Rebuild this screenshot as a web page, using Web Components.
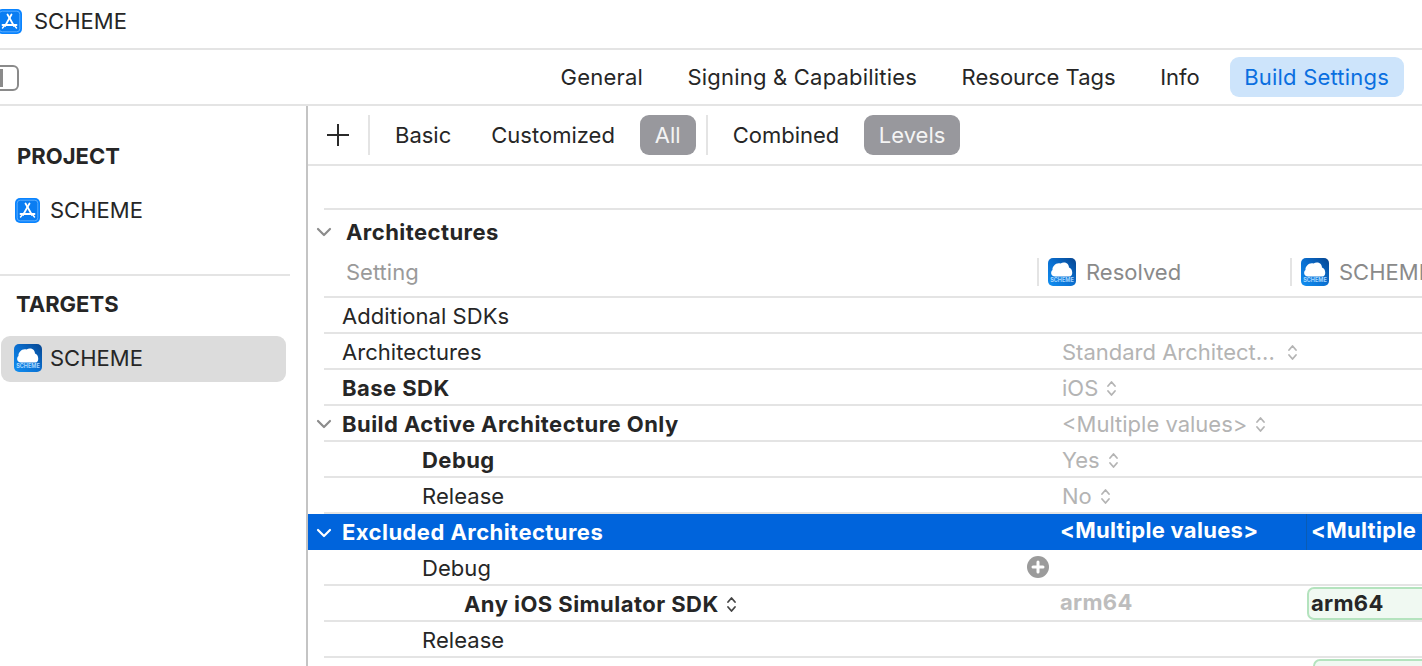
<!DOCTYPE html>
<html>
<head>
<meta charset="utf-8">
<title>Build Settings</title>
<style>
    html, body { margin: 0; height: 100%; background: #fff; overflow: hidden; }
    body { font: 22px Inter, "Liberation Sans", sans-serif; color: #262626; }
</style>
</head>
<body>
<xc-window></xc-window>

<script>
const esc = (s) => (s || '').replace(/&/g, '&amp;').replace(/</g, '&lt;').replace(/>/g, '&gt;');

// --- Icons ---
class AppIcon extends HTMLElement {
    connectedCallback() {
        const kind = this.getAttribute('kind') || 'store';
        const size = this.getAttribute('size') || 25;
        const store = `
            <rect width="25" height="25" rx="5" fill="#0a84ff"/>
            <rect x="2.200" y="2.200" width="20.600" height="20.600" rx="3" fill="#0a7df2" stroke="#6db8ff" stroke-width="0.800"/>
            <g stroke="#fff" stroke-width="1.800" stroke-linecap="round" fill="none">
                <path d="M10.500 5.500 L17 17"/>
                <path d="M14.500 5.500 L8 17"/>
                <path d="M5.500 16 H19.500"/>
                <path d="M5.500 19 L6.800 17.500 M19.500 19 L18.200 17.500" stroke-width="1.500"/>
            </g>`;
        const cloud = `
            <defs><linearGradient id="g" x1="1" y1="0" x2="0" y2="1">
                <stop offset="0" stop-color="#07458f"/><stop offset="0.5" stop-color="#0a6fd0"/><stop offset="1" stop-color="#118ff2"/>
            </linearGradient></defs>
            <rect width="28" height="28" rx="5" fill="url(#g)"/>
            <path d="M7 18.500 C3 18.500 2 14 4.500 12 C4 8 8.500 4 12.500 5.500 C16 3 21 5 21 9.500 C25 10.500 25.500 18.500 21.500 18.500 Z" fill="#fff"/>
            <text x="14" y="24" text-anchor="middle" font-size="5.500" font-weight="700" font-family="Inter, sans-serif" fill="#a8d8ff">SCHEME</text>`;
        this.attachShadow({ mode: 'open' }).innerHTML = `
            <style>:host { display: block; flex: none; line-height: 0; } svg { display: block; }</style>
            <svg width="${size}" height="${size}" viewBox="0 0 ${kind === 'store' ? 25 : 28} ${kind === 'store' ? 25 : 28}">${kind === 'store' ? store : cloud}</svg>`;
    }
}
customElements.define('xc-app-icon', AppIcon);

class Stepper extends HTMLElement {
    connectedCallback() {
        const color = this.getAttribute('color') || '#b4b4b4';
        this.attachShadow({ mode: 'open' }).innerHTML = `
            <style>:host { display: inline-block; line-height: 0; flex: none; }</style>
            <svg width="11" height="17" viewBox="0 0 11 17" fill="none" stroke="${color}" stroke-width="1.800" stroke-linecap="round" stroke-linejoin="round">
                <path d="M2 6 L5.500 2 L9 6"/><path d="M2 11 L5.500 15 L9 11"/>
            </svg>`;
    }
}
customElements.define('xc-stepper', Stepper);

// --- Title bar ---
class TitleBar extends HTMLElement {
    constructor() {
        super();
        this.attachShadow({ mode: 'open' }).innerHTML = `
            <style>
                :host { display: flex; align-items: center; height: 50px; padding-bottom: 6px; box-sizing: border-box;
                        border-bottom: 2px solid #e4e4e4; gap: 12px; }
                xc-app-icon { margin-left: -3px; }
            </style>
            <xc-app-icon kind="store"></xc-app-icon>
            <span>SCHEME</span>`;
    }
}
customElements.define('xc-titlebar', TitleBar);

// --- Editor tabs ---
class TabBar extends HTMLElement {
    constructor() {
        super();
        this.attachShadow({ mode: 'open' }).innerHTML = `
            <style>
                :host { display: flex; align-items: center; height: 56px; box-sizing: border-box; border-bottom: 2px solid #e4e4e4; padding-right: 18px; }
                .toggle { width: 24px; height: 26px; box-sizing: border-box; margin: 2px 0 0 -5px; flex: none;
                          border: 2px solid #8a8a8a; border-radius: 6px;
                          background: linear-gradient(90deg, #8a8a8a 6px, transparent 6px) no-repeat center / 100% 18px; }
                .tabs { margin-left: auto; display: flex; align-items: center; gap: 44.500px; letter-spacing: 0.2px; }
                .tight { letter-spacing: 0; }
                .active { margin-left: -14px; padding: 0 15px 0 14px; height: 40px; line-height: 40px; border-radius: 9px;
                          background: #cde4fb; color: #0a6fe0; }
            </style>
            <div class="toggle"></div>
            <div class="tabs">
                <span>General</span>
                <span>Signing &amp; Capabilities</span>
                <span class="tight">Resource Tags</span>
                <span class="tight">Info</span>
                <span class="active">Build Settings</span>
            </div>`;
    }
}
customElements.define('xc-tabbar', TabBar);

// --- Sidebar ---
class Sidebar extends HTMLElement {
    constructor() {
        super();
        this.attachShadow({ mode: 'open' }).innerHTML = `
            <style>
                :host { display: flex; flex-direction: column; width: 308px; box-sizing: border-box; flex: none; border-right: 2px solid #c4c4c4; }
                h2 { margin: 0 0 0 17px; font: 700 22px/30px Inter, sans-serif; color: #262626; }
                .project-head { margin-top: 35px; }
                .item { display: flex; align-items: center; height: 36px; margin: 21px 0 0 15px; gap: 10px; }
                hr { margin: 46px 16px 0 0; border: 0; height: 2px; background: #e4e4e4; }
                .targets-head { margin-top: 13px; margin-left: 16px; }
                .selected { display: flex; align-items: center; height: 46px; width: 285px; margin: 17px 0 0 1px; padding: 0 0 2px 13px;
                            box-sizing: border-box; gap: 8px; background: #dcdcdc; border-radius: 9px; }
            </style>
            <h2 class="project-head">PROJECT</h2>
            <div class="item"><xc-app-icon kind="store"></xc-app-icon><span>SCHEME</span></div>
            <hr>
            <h2 class="targets-head">TARGETS</h2>
            <div class="selected"><xc-app-icon kind="cloud" size="28"></xc-app-icon><span>SCHEME</span></div>`;
    }
}
customElements.define('xc-sidebar', Sidebar);

// --- Filter bar ---
class FilterBar extends HTMLElement {
    constructor() {
        super();
        this.attachShadow({ mode: 'open' }).innerHTML = `
            <style>
                :host { display: flex; align-items: center; height: 60px; box-sizing: border-box; border-bottom: 2px solid #e4e4e4; }
                svg { margin-left: 19px; flex: none; }
                .sep { width: 2px; height: 40px; background: #e4e4e4; flex: none; }
                .pill { background: #98989d; color: #f4f4f4; height: 40px; line-height: 40px; border-radius: 9px; }
            </style>
            <svg width="22" height="22" viewBox="0 0 22 22" stroke="#2a2a2a" stroke-width="2"><path d="M0 11 H22 M11 0 V22"/></svg>
            <div class="sep" style="margin-left:19px"></div>
            <span style="margin-left:25px">Basic</span>
            <span style="margin-left:40px">Customized</span>
            <span class="pill" style="margin-left:25px;padding:0 15px">All</span>
            <div class="sep" style="margin-left:10px"></div>
            <span style="margin-left:25px">Combined</span>
            <span class="pill" style="margin-left:25px;padding:0 14.500px">Levels</span>`;
    }
}
customElements.define('xc-filterbar', FilterBar);

// --- Setting row ---
class SettingRow extends HTMLElement {
    connectedCallback() {
        const a = (n) => this.getAttribute(n);
        const level = Number(a('level') || 0);
        const selected = this.hasAttribute('selected');
        const indent = [34, 114, 156][level];
        const boldValue = selected || this.hasAttribute('value-bold');
        const chevron = this.hasAttribute('open')
            ? `<svg class="chev" width="16" height="10" viewBox="0 0 16 10" fill="none" stroke="currentColor" stroke-width="2.200" stroke-linecap="round" stroke-linejoin="round"><path d="M2 2 L8 8 L14 2"/></svg>`
            : '';
        const stepLabel = this.hasAttribute('label-step') ? '<xc-stepper color="#444"></xc-stepper>' : '';
        const stepValue = this.hasAttribute('value-step') ? '<xc-stepper></xc-stepper>' : '';
        const add = this.hasAttribute('add')
            ? `<svg class="add" width="22" height="22" viewBox="0 0 22 22"><circle cx="11" cy="11" r="11" fill="#9b9b9b"/><path d="M11 6 V16 M6 11 H16" stroke="#fff" stroke-width="3" stroke-linecap="round"/></svg>`
            : '';
        const second = a('value2') !== null
            ? `<div class="col2" style="${a('box-left') ? 'margin-left:' + a('box-left') + 'px' : ''}">${esc(a('value2'))}</div>`
            : '';
        this.attachShadow({ mode: 'open' }).innerHTML = `
            <style>
                :host { display: block; }
                .row { display: flex; align-items: center; position: relative; height: ${selected ? 36 : 34}px;
                       background: ${selected ? '#0064dc' : 'transparent'}; color: ${selected ? '#fff' : '#262626'}; overflow: hidden; }
                .chev { position: absolute; left: 8px; top: 50%; margin-top: -4px; color: ${selected ? '#fff' : '#8c8c8c'}; }
                .label { position: absolute; left: ${indent}px; display: flex; align-items: center; gap: 7px; white-space: nowrap;
                         margin-top: ${selected ? 0 : 2}px;
                         font-weight: ${this.hasAttribute('bold') || selected ? 700 : 400};
                         letter-spacing: ${this.hasAttribute('bold') || selected ? 0.45 : 0.05}px; }
                .add { position: absolute; left: 719px; }
                .value { position: absolute; left: ${boldValue ? 752 : 754}px; display: flex; align-items: center;
                         gap: ${this.hasAttribute('wide-step') ? 12 : 8}px; white-space: nowrap;
                         margin-top: ${selected ? -4 : boldValue ? -2 : 2}px;
                         color: ${selected ? '#fff' : boldValue ? '#bdbdbd' : '#b4b4b4'}; font-weight: ${boldValue ? 700 : 400};
                         letter-spacing: ${boldValue ? 0.3 : 0}px; }
                .col2 { position: absolute; left: 998px; width: 200px; box-sizing: border-box; display: flex; align-items: center;
                        font-weight: 700; white-space: nowrap; letter-spacing: 0.3px;
                        ${selected
                            ? 'top: 0; height: 36px; padding: 0 0 4px 4px; border-left: 1px solid #0a5cb4;'
                            : 'top: 1px; height: 33px; margin-left: 1px; padding: 0 0 2px 2px; border: 2px solid #b4e3be; background: #f0f9f2; border-radius: 7px;'} }
                .line { height: 2px; margin-left: 16px; background: #e4e4e4; display: ${selected ? 'none' : 'block'}; }
            </style>
            <div class="row">
                ${chevron}
                <div class="label">${esc(a('label'))}${stepLabel}</div>
                ${add}
                <div class="value">${esc(a('value'))}${stepValue}</div>
                ${second}
            </div>
            <div class="line"></div>`;
    }
}
customElements.define('xc-row', SettingRow);

// --- Settings table ---
class SettingsTable extends HTMLElement {
    constructor() {
        super();
        this.attachShadow({ mode: 'open' }).innerHTML = `
            <style>
                :host { display: block; flex: 1; min-width: 0; overflow: hidden; }
                .gap { height: 44px; box-sizing: border-box; border-bottom: 2px solid #e4e4e4; margin-left: 16px; }
                .heading { display: flex; align-items: center; height: 44px; font-weight: 700; letter-spacing: 0.45px; }
                .heading svg { margin: 0 15px 0 8px; flex: none; }
                .heading span { margin-left: -1px; }
                .cols { display: flex; align-items: center; height: 36px; margin-bottom: 6px; color: #8a8a8a; white-space: nowrap; }
                .cols span.setting { margin-left: 38px; width: 691px; flex: none; color: #9a9a9a; }
                .sep { width: 2px; height: 28px; background: #e4e4e4; flex: none; }
                .cols xc-app-icon { margin: 0 10px 0 9px; }
                .cols span.res { width: 204px; flex: none; }
                .top-line { height: 2px; margin-left: 16px; background: #e4e4e4; }
            </style>
            <xc-filterbar></xc-filterbar>
            <div class="gap"></div>
            <div class="heading">
                <svg width="16" height="10" viewBox="0 0 16 10" fill="none" stroke="#8c8c8c" stroke-width="2.200" stroke-linecap="round" stroke-linejoin="round"><path d="M2 2 L8 8 L14 2"/></svg>
                <span>Architectures</span>
            </div>
            <div class="cols">
                <span class="setting">Setting</span>
                <div class="sep"></div>
                <xc-app-icon kind="cloud" size="28"></xc-app-icon>
                <span class="res">Resolved</span>
                <div class="sep"></div>
                <xc-app-icon kind="cloud" size="28"></xc-app-icon>
                <span>SCHEME</span>
            </div>
            <div class="top-line"></div>
            <xc-row label="Additional SDKs"></xc-row>
            <xc-row label="Architectures" value="Standard Architect..." value-step wide-step></xc-row>
            <xc-row label="Base SDK" bold value="iOS" value-step></xc-row>
            <xc-row label="Build Active Architecture Only" bold open value="&lt;Multiple values&gt;" value-step></xc-row>
            <xc-row level="1" label="Debug" bold value="Yes" value-step></xc-row>
            <xc-row level="1" label="Release" value="No" value-step></xc-row>
            <xc-row selected open label="Excluded Architectures" value="&lt;Multiple values&gt;" value2="&lt;Multiple"></xc-row>
            <xc-row level="1" label="Debug" add></xc-row>
            <xc-row level="2" label="Any iOS Simulator SDK" bold label-step value="arm64" value-bold value2="arm64"></xc-row>
            <xc-row level="1" label="Release"></xc-row>
            <xc-row value2="" box-left="7"></xc-row>`;
    }
}
customElements.define('xc-settings', SettingsTable);

// --- Window ---
class XcWindow extends HTMLElement {
    constructor() {
        super();
        this.attachShadow({ mode: 'open' }).innerHTML = `
            <style>
                :host { display: flex; flex-direction: column; height: 666px; overflow: hidden; }
                .body { display: flex; flex: 1; min-height: 0; }
            </style>
            <xc-titlebar></xc-titlebar>
            <xc-tabbar></xc-tabbar>
            <div class="body">
                <xc-sidebar></xc-sidebar>
                <xc-settings></xc-settings>
            </div>`;
    }
}
customElements.define('xc-window', XcWindow);
</script>
</body>
</html>
